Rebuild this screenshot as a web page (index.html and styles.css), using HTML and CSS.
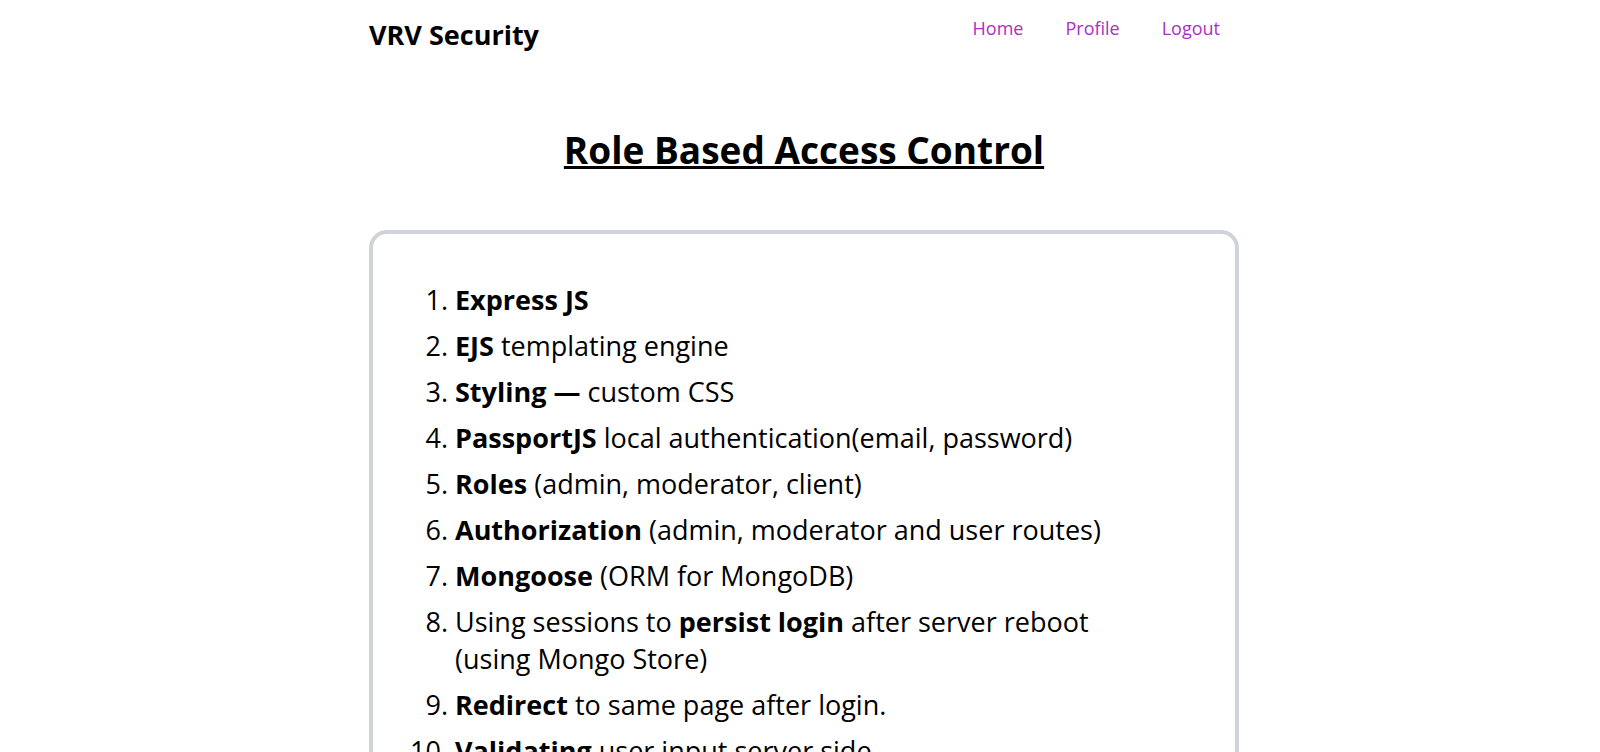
FILE: index.html
```html
<!DOCTYPE html>
<html lang="en">
<head>
<meta charset="utf-8">
<title>VRV Security</title>
<link rel="stylesheet" href="styles.css">
</head>
<body>
<div class="container">
  <header class="header">
    <h3 class="brand">VRV Security</h3>
    <nav class="nav">
      <a class="nav-link" href="#">Home</a>
      <a class="nav-link" href="#">Profile</a>
      <a class="nav-link" href="#">Logout</a>
    </nav>
  </header>
  <main>
    <h1 class="title">Role Based Access Control</h1>
    <section class="card">
      <ol class="features">
        <li><b>Express JS</b></li>
        <li><b>EJS</b> templating engine</li>
        <li><b>Styling —</b> custom CSS</li>
        <li><b>PassportJS</b> local authentication(email, password)</li>
        <li><b>Roles</b> (admin, moderator, client)</li>
        <li><b>Authorization</b> (admin, moderator and user routes)</li>
        <li><b>Mongoose</b> (ORM for MongoDB)</li>
        <li>Using sessions to <b>persist login</b> after server reboot (using Mongo Store)</li>
        <li><b>Redirect</b> to same page after login.</li>
        <li><b>Validating</b> user input server side.</li>
      </ol>
    </section>
  </main>
</div>
</body>
</html>
```
FILE: styles.css
```css
* { box-sizing: border-box; }
body {
  margin: 0;
  padding-left: 8px;
  background: #fff;
  color: #000;
  font-family: "Open Sans", sans-serif;
}
.container {
  max-width: 870px;
  margin: 0 auto;
}
.header {
  display: flex;
  justify-content: space-between;
  align-items: flex-start;
  padding: 16px 19px 0 0;
}
.brand {
  margin: 0;
  font-size: 27px;
  line-height: 38px;
}
.nav {
  display: flex;
  gap: 42px;
}
.nav-link {
  color: #ab30c4;
  font-size: 18px;
  line-height: 24px;
  text-decoration: none;
}
.title {
  margin: 70px 0 54px;
  font-size: 37px;
  line-height: 52px;
  text-align: center;
  text-decoration: underline;
}
.card {
  padding: 47px 80px 47px 82px;
  border: 4px solid #d1d3db;
  border-radius: 18px;
}
.features {
  margin: 0;
  padding: 0;
  font-size: 27px;
  line-height: 37px;
}
.features li { margin-bottom: 9px; }
```
